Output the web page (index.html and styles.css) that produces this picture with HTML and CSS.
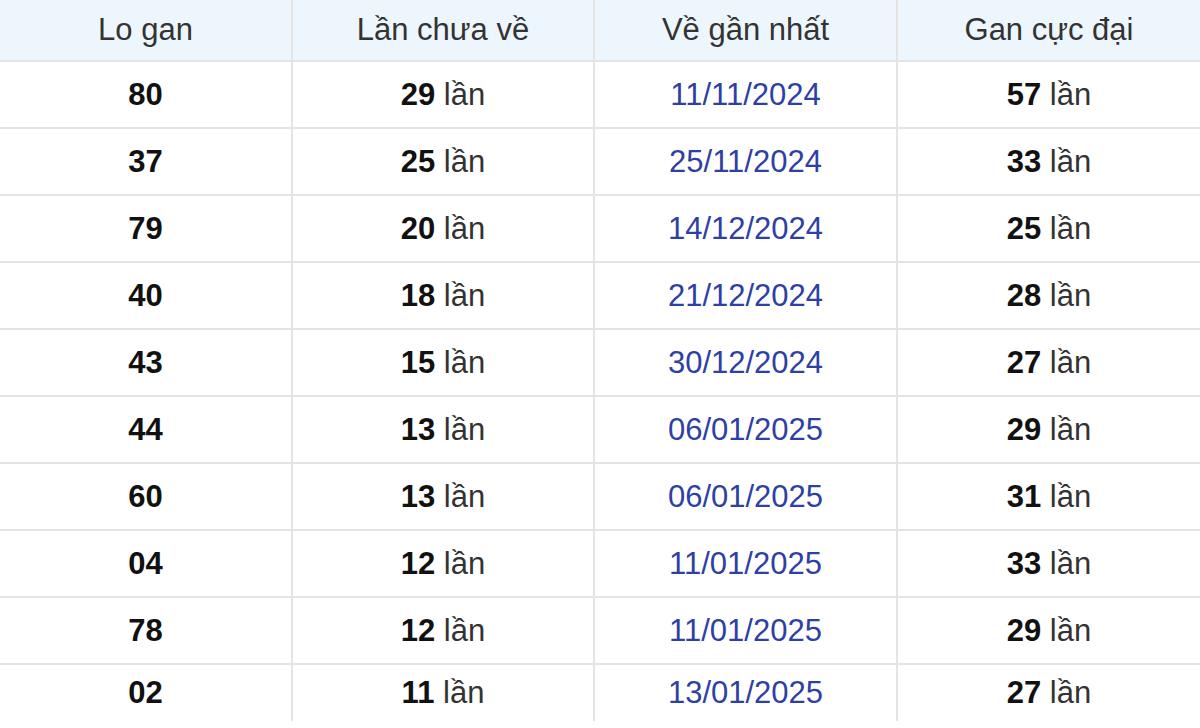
FILE: index.html
```html
<!DOCTYPE html>
<html lang="vi">
<head>
<meta charset="utf-8">
<title>Lo gan</title>
<link rel="stylesheet" href="styles.css">
</head>
<body>
<table class="gan-table">
  <colgroup>
    <col class="c1"><col class="c2"><col class="c3"><col class="c4">
  </colgroup>
  <thead>
    <tr><th>Lo gan</th><th>Lần chưa về</th><th>Về gần nhất</th><th>Gan cực đại</th></tr>
  </thead>
  <tbody>
    <tr><td class="num">80</td><td><b>29</b> lần</td><td class="date">11/11/2024</td><td><b>57</b> lần</td></tr>
    <tr><td class="num">37</td><td><b>25</b> lần</td><td class="date">25/11/2024</td><td><b>33</b> lần</td></tr>
    <tr><td class="num">79</td><td><b>20</b> lần</td><td class="date">14/12/2024</td><td><b>25</b> lần</td></tr>
    <tr><td class="num">40</td><td><b>18</b> lần</td><td class="date">21/12/2024</td><td><b>28</b> lần</td></tr>
    <tr><td class="num">43</td><td><b>15</b> lần</td><td class="date">30/12/2024</td><td><b>27</b> lần</td></tr>
    <tr><td class="num">44</td><td><b>13</b> lần</td><td class="date">06/01/2025</td><td><b>29</b> lần</td></tr>
    <tr><td class="num">60</td><td><b>13</b> lần</td><td class="date">06/01/2025</td><td><b>31</b> lần</td></tr>
    <tr><td class="num">04</td><td><b>12</b> lần</td><td class="date">11/01/2025</td><td><b>33</b> lần</td></tr>
    <tr><td class="num">78</td><td><b>12</b> lần</td><td class="date">11/01/2025</td><td><b>29</b> lần</td></tr>
    <tr class="last"><td class="num">02</td><td><b>11</b> lần</td><td class="date">13/01/2025</td><td><b>27</b> lần</td></tr>
  </tbody>
</table>
</body>
</html>
```

FILE: styles.css
```css
html, body {
  margin: 0;
  padding: 0;
  background: #ffffff;
}
body {
  font-family: "Liberation Sans", Arial, sans-serif;
  color: #333333;
  overflow: hidden;
}
.gan-table {
  width: 1200px;
  border-collapse: collapse;
  table-layout: fixed;
  font-size: 31px;
}
.c1 { width: 292px; }
.c2 { width: 302px; }
.c3 { width: 303px; }
.c4 { width: 303px; }
.gan-table th,
.gan-table td {
  text-align: center;
  vertical-align: middle;
  padding: 0;
  border: 2px solid #e4e4e4;
}
.gan-table th:first-child,
.gan-table td:first-child { border-left: none; }
.gan-table th:last-child,
.gan-table td:last-child { border-right: none; }
.gan-table thead th {
  border-top: none;
  background: #eef6fd;
  font-weight: normal;
  color: #333333;
  height: 60px;
  line-height: 56px;
}
.gan-table tbody td {
  height: 65px;
}
.gan-table tbody tr.last td {
  height: 56px;
  border-bottom: none;
}
.gan-table b,
.gan-table .num {
  font-weight: bold;
  color: #111111;
}
.gan-table .date {
  color: #2e3fa5;
}
```
